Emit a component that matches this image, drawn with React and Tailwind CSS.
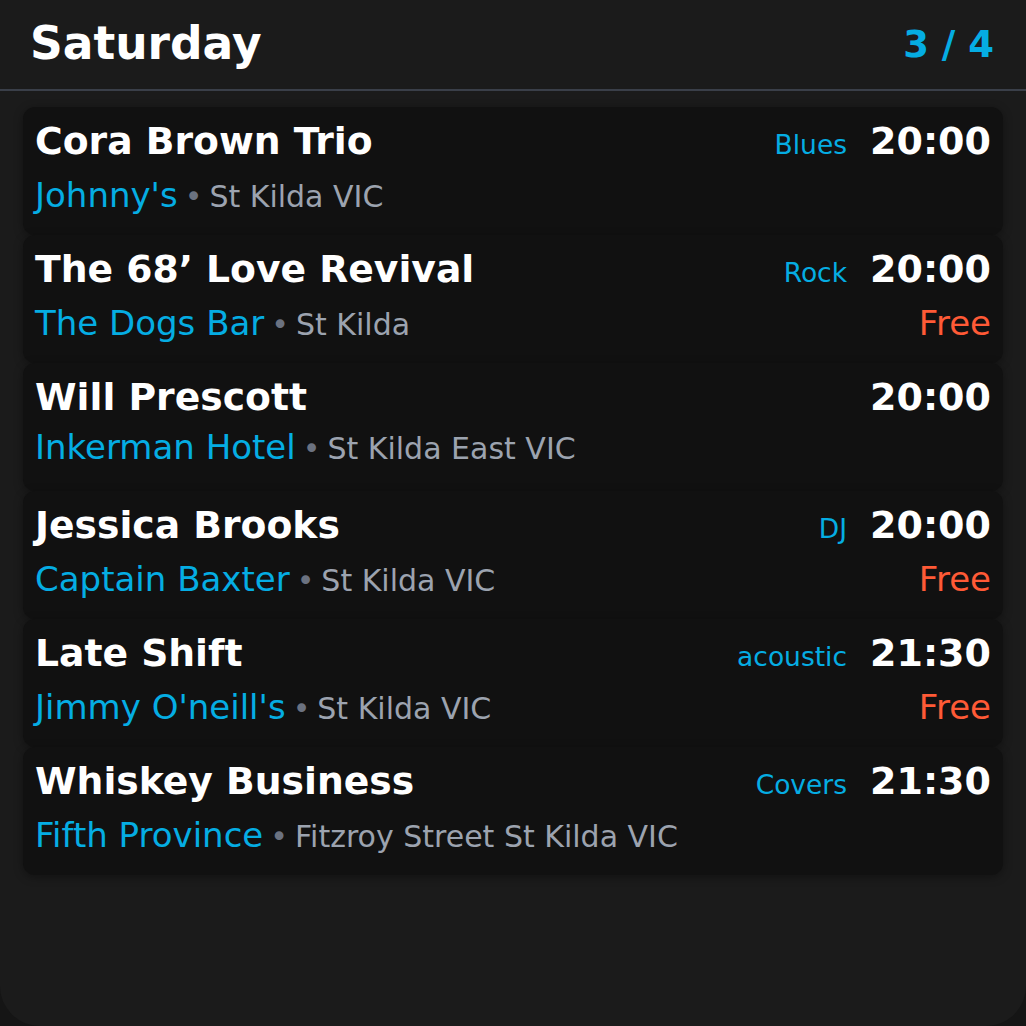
import React from "react";

const gigs = [
  { title: "Cora Brown Trio", venue: "Johnny's", place: "St Kilda VIC", genre: "Blues", time: "20:00", free: false },
  { title: "The 68’ Love Revival", venue: "The Dogs Bar", place: "St Kilda", genre: "Rock", time: "20:00", free: true },
  { title: "Will Prescott", venue: "Inkerman Hotel", place: "St Kilda East VIC", genre: "", time: "20:00", free: false },
  { title: "Jessica Brooks", venue: "Captain Baxter", place: "St Kilda VIC", genre: "DJ", time: "20:00", free: true },
  { title: "Late Shift", venue: "Jimmy O'neill's", place: "St Kilda VIC", genre: "acoustic", time: "21:30", free: true },
  { title: "Whiskey Business", venue: "Fifth Province", place: "Fitzroy Street St Kilda VIC", genre: "Covers", time: "21:30", free: false },
];

function GigCard({ gig }) {
  return (
    <div className="h-[128px] rounded-xl bg-[#111111] px-3 pt-[12px] shadow-[0_2px_10px_rgba(0,0,0,0.35)]">
      {/* title + genre/time */}
      <div className="flex items-baseline justify-between leading-[44px]">
        <span className="text-[37.7px] font-bold text-white">{gig.title}</span>
        <div className="flex items-baseline gap-[23px]">
          {gig.genre && <span className="text-[26.5px] text-[#05ade3]">{gig.genre}</span>}
          <span className="text-[38px] font-bold text-white">{gig.time}</span>
        </div>
      </div>

      {/* venue + price */}
      <div className="mt-[8px] flex items-baseline justify-between leading-[40px]">
        <div className="flex items-baseline">
          <span className="text-[34px] text-[#05ade3]">{gig.venue}</span>
          <span className="ml-[7px] text-[30px] text-[#6b7280]">•</span>
          <span className="ml-[7px] text-[30px] text-[#9ca3af]">{gig.place}</span>
        </div>
        {gig.free && <span className="text-[34px] text-[#ff5a36]">Free</span>}
      </div>
    </div>
  );
}

export default function App() {
  return (
    <div className="h-[1026px] w-[1026px] bg-[#151515] font-['DejaVu_Sans',sans-serif]">
      <div className="h-full w-full rounded-b-[40px] bg-[#1b1b1b]">
        <header className="flex h-[91px] items-center justify-between border-b-2 border-[#3a3f49] pl-[30px] pr-8">
          <h1 className="text-[45.5px] font-bold text-white">Saturday</h1>
          <span className="text-[37px] font-bold text-[#05ade3]">3 / 4</span>
        </header>

        <div className="mx-[23px] mt-[16px] flex flex-col">
          {gigs.map((gig) => (
            <GigCard key={gig.title} gig={gig} />
          ))}
        </div>
      </div>
    </div>
  );
}
